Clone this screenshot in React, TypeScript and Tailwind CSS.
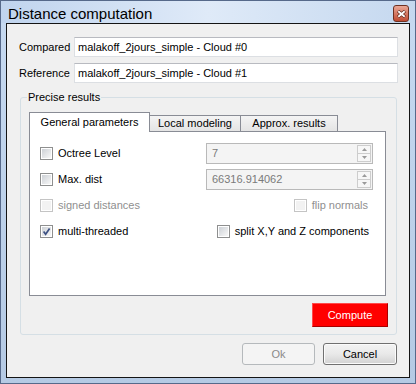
import React from 'react';

const Check = ({ checked, disabled }: { checked?: boolean; disabled?: boolean }) => (
  <span
    className={
      disabled
        ? 'flex h-[13px] w-[13px] shrink-0 border border-[#c4c4c4] bg-white p-[1px]'
        : 'flex h-[13px] w-[13px] shrink-0 border border-[#8e8f8f] bg-white p-[1px]'
    }
  >
    <span
      className={
        disabled
          ? 'relative flex h-full w-full bg-[#f2f2f2]'
          : 'relative flex h-full w-full bg-gradient-to-br from-[#cdd1d6] to-[#f8f8f8]'
      }
    >
      {checked && (
        <svg viewBox="0 0 9 9" className="h-[9px] w-[9px]">
          <path d="M1.6 4.6 L3.6 7.2 L7.6 1.4" fill="none" stroke="#3d5183" strokeWidth="1.7" />
        </svg>
      )}
    </span>
  </span>
);

const Option = ({ label, checked, disabled }: { label: string; checked?: boolean; disabled?: boolean }) => (
  <label className={disabled ? 'flex items-center gap-[5px] text-[#8f8f8f]' : 'flex items-center gap-[5px]'}>
    <Check checked={checked} disabled={disabled} />
    <span>{label}</span>
  </label>
);

const Arrow = ({ up }: { up?: boolean }) => (
  <svg viewBox="0 0 5 3" className="h-[3px] w-[5px]">
    <path d={up ? 'M0 3 L2.5 0 L5 3 Z' : 'M0 0 L2.5 3 L5 0 Z'} fill="#9a9a9a" />
  </svg>
);

const SpinBox = ({ value }: { value: string }) => (
  <div className="flex h-[21px] w-[167px] border border-[#b9b9b9] bg-[#f4f4f4] text-[#7a7a7a]">
    <div className="flex flex-1 items-center pl-[5px]">{value}</div>
    <div className="flex w-[15px] flex-col py-[1px] pr-[1px]">
      <div className="flex flex-1 items-center justify-center border border-[#cdcdcd] bg-[#f7f7f7]">
        <Arrow up />
      </div>
      <div className="flex flex-1 items-center justify-center border border-t-0 border-[#cdcdcd] bg-[#f7f7f7]">
        <Arrow />
      </div>
    </div>
  </div>
);

const Field = ({ label, value }: { label: string; value: string }) => (
  <div className="flex items-center">
    <span className="w-[55px]">{label}</span>
    <div className="flex h-[20px] flex-1 items-center border border-[#dcdfe3] border-t-[#b8bac0] bg-white pl-[3px]">
      {value}
    </div>
  </div>
);

export default function App() {
  return (
    <div className="h-[384px] w-[416px] bg-white">
      <div className="flex h-full w-full flex-col border border-[#56698a] bg-gradient-to-b from-[#c7daf1] to-[#b5cae4] font-['Liberation_Sans',Arial,sans-serif] text-[11px] text-black">
        <div className="flex h-[22px] items-start justify-between bg-gradient-to-r from-[#c0d4ee] via-[#dfeaf8] to-[#c5d8ef] pl-[7px] pr-[6px]">
          <span className="pt-[5px] text-[15px] leading-[15px]">Distance computation</span>
          <div className="mt-[4px] flex h-[17px] w-[16px] items-center justify-center rounded-[3px] border border-[#6e3122] bg-gradient-to-b from-[#eaa796] via-[#d57a65] to-[#bf4a31]">
            <svg viewBox="0 0 9 8" className="h-[8px] w-[9px]">
              <path d="M1 1 L8 7 M8 1 L1 7" stroke="#5b2418" strokeWidth="3.2" />
              <path d="M1.3 1.2 L7.7 6.8 M7.7 1.2 L1.3 6.8" stroke="#ffffff" strokeWidth="1.8" />
            </svg>
          </div>
        </div>

        <div className="mx-[5px] mb-[5px] flex flex-1 flex-col border border-[#141414] bg-[#f0f0f0] pl-[12px] pr-[11px] pt-[13px]">
          <div className="flex flex-col gap-[6px]">
            <Field label="Compared" value="malakoff_2jours_simple - Cloud #0" />
            <Field label="Reference" value="malakoff_2jours_simple - Cloud #1" />
          </div>

          <fieldset className="mr-[1px] ml-[1px] mt-[7px] rounded-[3px] border border-[#d5dfe5]">
            <legend className="ml-[6px] px-[1px] leading-[14px]">Precise results</legend>
            <div className="pb-[7px] pl-[8px] pr-[10px] pt-[8px]">
              <div className="flex items-end">
                <div className="relative z-10 -mb-px flex h-[20px] w-[121px] items-center justify-center border border-b-0 border-[#898c95] bg-white pb-[1px]">
                  General parameters
                </div>
                <div className="-ml-px flex h-[16px] w-[92px] items-center justify-center border border-b-0 border-[#898c95] bg-gradient-to-b from-[#f4f4f4] to-[#e4e4e4]">
                  Local modeling
                </div>
                <div className="-ml-px flex h-[16px] w-[98px] items-center justify-center border border-b-0 border-[#898c95] bg-gradient-to-b from-[#f4f4f4] to-[#e4e4e4]">
                  Approx. results
                </div>
              </div>
              <div className="flex h-[165px] flex-col gap-[5px] border border-[#898c95] bg-white pl-[10px] pr-[12px] pt-[11px]">
                <div className="flex h-[21px] items-center justify-between">
                  <Option label="Octree Level" />
                  <SpinBox value="7" />
                </div>
                <div className="flex h-[21px] items-center justify-between">
                  <Option label="Max. dist" />
                  <SpinBox value="66316.914062" />
                </div>
                <div className="flex h-[21px] items-center justify-between">
                  <Option label="signed distances" disabled />
                  <div className="pr-[5px]">
                    <Option label="flip normals" disabled />
                  </div>
                </div>
                <div className="flex h-[21px] items-center justify-between">
                  <Option label="multi-threaded" checked />
                  <div className="pr-[4px]">
                    <Option label="split X,Y and Z components" />
                  </div>
                </div>
              </div>
              <div className="-mr-[2px] mt-[7px] flex justify-end">
                <button className="h-[24px] w-[76px] border border-[#a80000] border-l-[#ff4a4a] border-t-[#ff4a4a] bg-[#ff0000] text-white">
                  Compute
                </button>
              </div>
            </div>
          </fieldset>

          <div className="mt-[8px] flex justify-end gap-[8px] pr-[1px]">
            <button className="h-[22px] w-[73px] rounded-[3px] border border-[#b5b9bc] bg-[#f4f4f4] text-[#8a8a8a]">
              Ok
            </button>
            <button className="h-[22px] w-[74px] rounded-[3px] border border-[#707070] bg-gradient-to-b from-[#f3f3f3] via-[#e9e9e9] to-[#d2d2d2] shadow-[inset_0_0_0_1px_#fbfbfb]">
              Cancel
            </button>
          </div>
        </div>
      </div>
    </div>
  );
}
